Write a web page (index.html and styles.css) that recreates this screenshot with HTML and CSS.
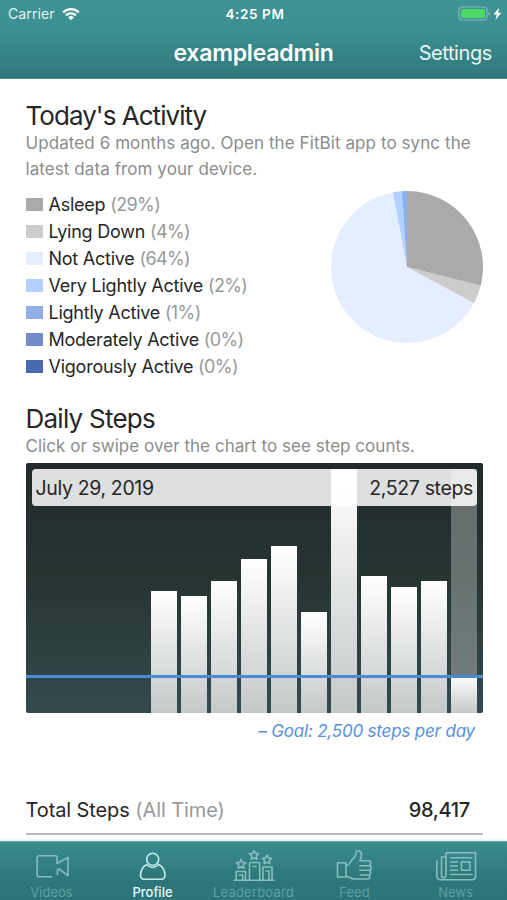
FILE: index.html
```html
<!DOCTYPE html>
<html lang="en">
<head>
    <meta charset="UTF-8">
    <title>Profile</title>
    <link rel="stylesheet" href="styles.css">
</head>
<body>
    <div class="screen">

        <!-- Header -->
        <header class="header">
            <div class="status-bar">
                <div class="status-left">
                    <span class="carrier">Carrier</span>
                    <svg class="wifi" width="18" height="14" viewBox="0 0 18 14" fill="none" stroke="#fff" stroke-width="2.4">
                        <path d="M1.2 5.3a11.2 11.2 0 0 1 15.6 0M4.1 8.4a7 7 0 0 1 9.8 0"/>
                        <path d="M9 13.2L6.2 10.4a4 4 0 0 1 5.6 0z" fill="#fff" stroke="none"/>
                    </svg>
                </div>
                <div class="status-time">4:25 PM</div>
                <div class="status-right">
                    <svg width="44" height="16" viewBox="0 0 44 16">
                        <rect x="1" y="1" width="28" height="13" rx="3.5" fill="none" stroke="#82b9ba" stroke-width="1.2"/>
                        <rect x="3" y="3" width="24" height="9" rx="1.5" fill="#4cd964"/>
                        <path d="M30.6 5.5v4.4q1.6-.7 1.6-2.2t-1.6-2.2z" fill="#82b9ba"/>
                        <path d="M41.3 1.5l-5.8 7h3.3l-1.4 5.5 6-7.3h-3.4z" fill="#fff"/>
                    </svg>
                </div>
            </div>
            <div class="nav-bar">
                <h1>exampleadmin</h1>
                <a class="settings">Settings</a>
            </div>
        </header>

        <main class="content">
            <!-- Activity -->
            <section class="activity">
                <h2 class="activity-title">Today's Activity</h2>
                <p class="note activity-note">Updated 6 months ago. Open the FitBit app to sync the<br>latest data from your device.</p>
                <div class="activity-row">
                    <ul class="legend">
                        <li><i class="swatch asleep"></i>Asleep <span>(29%)</span></li>
                        <li><i class="swatch lying"></i>Lying Down <span>(4%)</span></li>
                        <li><i class="swatch not-active"></i>Not Active <span>(64%)</span></li>
                        <li><i class="swatch very-light"></i>Very Lightly Active <span>(2%)</span></li>
                        <li><i class="swatch light"></i>Lightly Active <span>(1%)</span></li>
                        <li><i class="swatch moderate"></i>Moderately Active <span>(0%)</span></li>
                        <li><i class="swatch vigorous"></i>Vigorously Active <span>(0%)</span></li>
                    </ul>
                    <svg class="pie" width="152" height="152" viewBox="-76 -76 152 152">
                        <circle r="76" fill="#e5eeff"/>
                        <path d="M0 0V-76A76 76 0 0 1 73.6 18.8z" fill="#aaa"/>
                        <path d="M0 0L73.6 18.8A76 76 0 0 1 67 35.9z" fill="#ccc"/>
                        <path d="M0 0L-14 -74.7A76 76 0 0 1 -5 -75.8z" fill="#b3d1ff"/>
                        <path d="M0 0L-5 -75.8A76 76 0 0 1 0 -76z" fill="#8caef2"/>
                    </svg>
                </div>
            </section>

            <!-- Steps chart -->
            <section class="steps">
                <h2 class="steps-title">Daily Steps</h2>
                <p class="note steps-note">Click or swipe over the chart to see step counts.</p>
                <div class="chart">
                    <div class="bars">
                        <div class="slot"><div class="bar" style="height: 122px"></div></div>
                        <div class="slot"><div class="bar" style="height: 117px"></div></div>
                        <div class="slot"><div class="bar" style="height: 132px"></div></div>
                        <div class="slot"><div class="bar" style="height: 154px"></div></div>
                        <div class="slot"><div class="bar" style="height: 167px"></div></div>
                        <div class="slot"><div class="bar" style="height: 101px"></div></div>
                        <div class="slot"><div class="bar" style="height: 244px"></div></div>
                        <div class="slot"><div class="bar" style="height: 137px"></div></div>
                        <div class="slot"><div class="bar" style="height: 126px"></div></div>
                        <div class="slot"><div class="bar" style="height: 132px"></div></div>
                        <div class="slot selected"><div class="bar" style="height: 37px"></div></div>
                    </div>
                    <div class="goal-line"></div>
                    <div class="chart-label">
                        <span class="chart-date">July 29, 2019</span>
                        <span class="chart-count">2,527 steps</span>
                    </div>
                </div>
                <p class="goal">– Goal: 2,500 steps per day</p>
            </section>

            <div class="total">
                <div class="total-name">Total Steps <span>(All Time)</span></div>
                <div class="total-value">98,417</div>
            </div>
        </main>

        <!-- Tabs -->
        <nav class="tabs">
            <a class="tab">
                <svg width="44" height="34" viewBox="0 0 44 34">
                    <path d="M21.5 28.7H9q-1.8 0-1.8-1.8V9.5q0-1.8 1.8-1.8H25.5q1.5 0 1.5 1.5V15.5L38 9.5v18.2L29 21l-1.5 1v4.5"/>
                </svg>
                <span class="tab-videos">Videos</span>
            </a>
            <a class="tab active">
                <svg width="44" height="34" viewBox="0 0 44 34">
                    <circle cx="21.7" cy="11.3" r="6"/>
                    <path d="M15.7 16.5Q9.5 20 9.5 27.3q0 4 4 4h16.5q4 0 4-4 0-7.3-6.2-10.8-6 6-12.1 0z"/>
                </svg>
                <span class="tab-profile">Profile</span>
            </a>
            <a class="tab">
                <svg width="44" height="34" viewBox="0 0 44 34">
                    <path d="M2 32.3h40M4.2 32V23.5h9.3V32M17.5 32V16q0-1.5 1.5-1.5h7.5q1.2 0 1.2 1.5V32M31 32V19h9V32M7.2 27h3.5v5M21 18.5h3M34 23h3v9"/>
                    <path d="M9 11.5l1.4 2.9 3.2.4-2.3 2.2.6 3.2L9 18.7l-2.9 1.5.6-3.2-2.3-2.2 3.2-.4zM22 2.5l1.4 2.9 3.2.4L24.3 8l.6 3.2L22 9.7l-2.9 1.5.6-3.2-2.3-2.2 3.2-.4zM35 7l1.4 2.9 3.2.4-2.3 2.2.6 3.2-2.9-1.5-2.9 1.5.6-3.2-2.3-2.2 3.2-.4z"/>
                </svg>
                <span class="tab-leaderboard">Leaderboard</span>
            </a>
            <a class="tab">
                <svg width="44" height="34" viewBox="0 0 44 34">
                    <path d="M4.5 14.7h8.5V29H4.5zM13 17.7q3.5-1 5-4.2 1-2.3 3.2-4Q22.8 8 22.8 5.5q0-3 2.7-2.8 3 .5 3 4 0 2.5-1.5 6h8.5q2.3 0 2.3 2.5t-2.3 2.5h-8.7M35.5 17.7q2.7 0 2.7 2.3t-2.7 2.3h-8.7M35.5 22.3q2.2 0 2.2 2.3t-2.2 2.4h-8.2M35 27q1.8 0 1.8 2t-1.8 2H22q-3 0-5-1.5-1.5-1-4-1"/>
                </svg>
                <span class="tab-feed">Feed</span>
            </a>
            <a class="tab">
                <svg width="44" height="34" viewBox="0 0 44 34">
                    <path d="M12 27V4.7h29.5V28.5q0 3.2-3.2 3.2H7q-4.2 0-4.2-4V13M7.5 13v14.5q0 2.2 2.2 2.2T12 27V9H7.5v4M16.5 9.7h21.5M16.5 14h7M16.5 18h7M16.5 22.3h7M16.5 26.5h21.5M27.5 14H36v8.3h-8.5z"/>
                </svg>
                <span class="tab-news">News</span>
            </a>
        </nav>
    </div>
</body>
</html>
```
FILE: styles.css
```css
* {
    box-sizing: border-box;
}
body {
    margin: 0;
    background: #fff;
    color: #262626;
    font-family: Inter, "Liberation Sans", sans-serif;
}
h1, h2, p, ul {
    margin: 0;
    padding: 0;
    font-weight: 400;
}
.screen {
    width: 507px;
    height: 900px;
    display: flex;
    flex-direction: column;
    overflow: hidden;
}

/* header */
.header {
    height: 79px;
    background: linear-gradient(#3e9394 0, #3c9091 40%, #2f777a 100%);
    border-bottom: 1px solid #4b8c8e;
    color: #fff;
    flex-shrink: 0;
}
.status-bar {
    height: 27px;
    display: grid;
    grid-template-columns: 1fr auto 1fr;
    align-items: center;
    padding: 0 5px 0 8px;
}
.status-left {
    display: flex;
    align-items: center;
    gap: 7px;
}
.carrier {
    font-size: 14px;
    letter-spacing: 0.1px;
    color: #e4f3f3;
}
.status-time {
    font-size: 13.5px;
    font-weight: 600;
    letter-spacing: 0.6px;
}
.status-right {
    display: flex;
    justify-content: flex-end;
}
.nav-bar {
    height: 51px;
    display: grid;
    grid-template-columns: 1fr auto 1fr;
    align-items: center;
    padding: 0 15px;
}
.nav-bar h1 {
    grid-column: 2;
    font-size: 23px;
    font-weight: 600;
    letter-spacing: -0.2px;
}
.settings {
    text-align: right;
    font-size: 20px;
    letter-spacing: -0.4px;
    color: #e4f5f5;
}

/* content */
.content {
    flex: 1;
    padding: 21px 25px 0 25.5px;
}
h2 {
    font-size: 26px;
    line-height: 31px;
}
.activity-title {
    letter-spacing: -0.96px;
}
.steps-title {
    letter-spacing: -0.75px;
}
.note {
    font-size: 17px;
    line-height: 26px;
    letter-spacing: 0.08px;
    color: #8c8c8c;
    white-space: nowrap;
}
.activity-note {
    margin-top: -1px;
}
.activity-row {
    display: flex;
    justify-content: space-between;
    margin-top: 9px;
    margin-right: -1px;
}
.legend {
    list-style: none;
}
.legend li {
    height: 27px;
    display: flex;
    align-items: center;
    font-size: 18px;
    letter-spacing: -0.24px;
    white-space: pre;
}
.legend span {
    color: #999;
    letter-spacing: -0.6px;
}
.swatch {
    width: 17px;
    height: 13px;
    margin-right: 6px;
}
.asleep { background: #aaa; }
.lying { background: #ccc; }
.not-active { background: #e5eeff; }
.very-light { background: #b3d1ff; }
.light { background: #93ade6; }
.moderate { background: #718bcb; }
.vigorous { background: #4a69b0; }

/* chart */
.steps {
    margin-top: 23px;
}
.steps-note {
    margin-top: -1px;
    letter-spacing: 0.04px;
}
.chart {
    position: relative;
    height: 250px;
    margin-top: 4px;
    margin-right: -1px;
    border-radius: 2px;
    background: linear-gradient(#222a2c 0, #263432 45%, #344b4d 100%);
    overflow: hidden;
}
.bars {
    height: 100%;
    display: flex;
    justify-content: flex-end;
    gap: 4px;
    padding: 6px 6px 0 0;
}
.slot {
    width: 26px;
    display: flex;
    align-items: flex-end;
}
.slot.selected {
    background: rgba(255, 255, 255, 0.3);
}
.bar {
    width: 100%;
    background: linear-gradient(#fff, #c3c8c8);
}
.goal-line {
    position: absolute;
    left: 0;
    right: 0;
    top: 212px;
    height: 3px;
    background: #4b8bd5;
}
.chart-label {
    position: absolute;
    top: 6px;
    left: 6px;
    right: 6px;
    height: 37px;
    padding: 0 4px;
    border-radius: 4px;
    display: flex;
    justify-content: space-between;
    align-items: center;
    background: rgba(255, 255, 255, 0.85);
    font-size: 19.5px;
    letter-spacing: -0.35px;
}
.goal {
    margin-top: 6px;
    padding-right: 7px;
    font-size: 17px;
    line-height: 25px;
    letter-spacing: -0.19px;
    font-style: italic;
    text-align: right;
    color: #5791dc;
}

/* total */
.total {
    margin-top: 42px;
    margin-right: -1px;
    height: 49px;
    padding: 0 13px 0 0;
    display: flex;
    justify-content: space-between;
    align-items: center;
    border-bottom: 2px solid #b8b8b8;
    font-size: 20px;
    letter-spacing: -0.1px;
}
.total span {
    color: #999;
}
.total-value {
    font-weight: 500;
    letter-spacing: -0.3px;
}

/* tabs */
.tabs {
    height: 59px;
    flex-shrink: 0;
    display: flex;
    padding: 7px 1px 0;
    border-top: 1px solid #6fabac;
    background: linear-gradient(#3a8d8f 0, #2e777b 60%, #2d7378 100%);
    box-shadow: 0 -1px 3px rgba(0, 0, 0, 0.12);
}
.tab {
    flex: 1;
    display: flex;
    flex-direction: column;
    align-items: center;
    font-size: 13px;
    line-height: 16px;
    color: #5e9fa2;
}
.tab svg {
    fill: none;
    stroke: #86bec0;
    stroke-width: 1.6;
    stroke-linejoin: round;
    stroke-linecap: round;
    margin: -1px 0 2px;
    flex-shrink: 0;
}
.tab-leaderboard {
    letter-spacing: 0.2px;
}
.tab.active {
    color: #e8fafa;
    font-weight: 500;
}
.tab.active svg {
    stroke: #c4ecec;
}
```
